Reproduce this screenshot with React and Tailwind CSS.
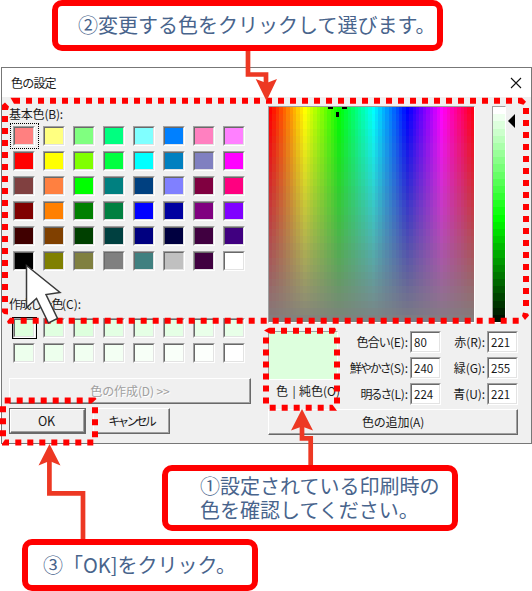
const BASIC_COLORS = [
  ['#ff8080', '#ffff80', '#80ff80', '#00ff80', '#80ffff', '#0080ff', '#ff80c0', '#ff80ff'],
  ['#ff0000', '#ffff00', '#80ff00', '#00ff40', '#00ffff', '#0080c0', '#8080c0', '#ff00ff'],
  ['#804040', '#ff8040', '#00ff00', '#008080', '#004080', '#8080ff', '#800040', '#ff0080'],
  ['#800000', '#ff8000', '#008000', '#008040', '#0000ff', '#0000a0', '#800080', '#8000ff'],
  ['#400000', '#804000', '#004000', '#004040', '#000080', '#000040', '#400040', '#400080'],
  ['#000000', '#808000', '#808040', '#808080', '#408080', '#c0c0c0', '#400040', '#ffffff']
];

const CUSTOM_COLORS = [
  ['#ddffdd', '#e0ffe0', '#ddffdd', '#e3ffe3', '#e5ffe5', '#e5ffe5', '#e9ffe9', '#e8ffe8'],
  ['#edffed', '#edffed', '#f1fff1', '#f3fff3', '#f7fff7', '#f9fff9', '#fcfffc', '#ffffff']
];

const HUE_STEPS = Array.from({ length: 60 }, (_, i) => i);
const LEVEL_STEPS = Array.from({ length: 30 }, (_, i) => i);

const SUNKEN =
  'border border-t-[#a0a0a0] border-l-[#a0a0a0] border-r-white border-b-white';
const SUNKEN_INNER =
  'border border-t-[#696969] border-l-[#696969] border-r-[#e3e3e3] border-b-[#e3e3e3]';
const RAISED =
  'border border-t-white border-l-white border-r-[#696969] border-b-[#696969] shadow-[inset_-1px_-1px_0_#a0a0a0] bg-[#f0f0f0]';

const Swatch = ({ color, focused, selected }) => (
  <div className="relative h-[20px] w-[22px]">
    <div className={`h-full w-full ${SUNKEN}`}>
      <div className={`h-full w-full ${SUNKEN_INNER}`} style={{ backgroundColor: color }} />
    </div>
    {focused && (
      <div className="absolute -top-[3px] -left-[3px] h-[26px] w-[29px] border border-dotted border-black" />
    )}
    {selected && (
      <div className="absolute -top-px -left-px h-[22px] w-[25px] border border-black" />
    )}
  </div>
);

const SwatchGrid = ({ rows, focusFirst, selectFirst }) => (
  <div className="ml-[4px] flex flex-col gap-[5px]">
    {rows.map((row, r) => (
      <div key={r} className="flex gap-2">
        {row.map((color, c) => (
          <Swatch
            key={c}
            color={color}
            focused={focusFirst && r === 0 && c === 0}
            selected={selectFirst && r === 0 && c === 0}
          />
        ))}
      </div>
    ))}
  </div>
);

const Field = ({ label, hotkey, value, tracking = '' }) => (
  <div className="flex h-[22px] items-center justify-end gap-[2px]">
    <span className="whitespace-nowrap">
      <span className={tracking}>{label}</span>
      <span className="tracking-[-0.1px]">{hotkey}</span>
    </span>
    <div className={`h-full w-[31px] ${SUNKEN}`}>
      <div className={`flex h-full w-full items-center bg-white pl-[2px] text-[11.5px] ${SUNKEN_INNER}`}>
        {value}
      </div>
    </div>
  </div>
);

const HueField = () => (
  <svg width="205" height="215" viewBox="0 0 205 215" shapeRendering="crispEdges">
    {HUE_STEPS.map((i) => {
      const x = Math.round(i * 3.42);
      return (
        <rect
          key={i}
          x={x}
          y="0"
          width={Math.round((i + 1) * 3.42) - x}
          height="215"
          fill={`hsl(${i * 6} 100% 50%)`}
        />
      );
    })}
    {LEVEL_STEPS.map((i) => {
      const y = Math.round(i * 7.17);
      return (
        <rect
          key={i}
          x="0"
          y={y}
          width="205"
          height={Math.round((i + 1) * 7.17) - y}
          fill="#808080"
          fillOpacity={i / 30}
        />
      );
    })}
    <path d="M59 0h5v2h-5zM73 0h5v2h-5zM67 5h3v5h-3z" fill="#000" />
  </svg>
);

const LuminanceBar = () => (
  <svg width="12" height="215" viewBox="0 0 12 215" shapeRendering="crispEdges">
    {LEVEL_STEPS.map((i) => {
      const y = Math.round(i * 7.17);
      return (
        <rect
          key={i}
          x="0"
          y={y}
          width="12"
          height={Math.round((i + 1) * 7.17) - y}
          fill={`hsl(120 100% ${100 - (i * 100) / 30}%)`}
        />
      );
    })}
  </svg>
);

const ColorDialog = () => (
  <div className="flex h-[377px] w-[531px] flex-col border border-[#777] bg-[#f0f0f0] text-[12px] leading-4 text-[#1a1a1a]">
    <div className="flex h-[29px] shrink-0 items-center justify-between bg-white pr-[9px] pl-[9px]">
      <span className="tracking-[-0.8px]">色の設定</span>
      <svg width="12" height="12" viewBox="0 0 12 12" fill="none" stroke="#111" strokeWidth="1.1">
        <path d="M1 1l10 10M11 1L1 11" />
      </svg>
    </div>
    <div className="flex pl-[7px]">
      <div className="flex w-[259px] shrink-0 flex-col pt-[9px]">
        <span className="mb-[4px] h-4 tracking-[-0.2px]">基本色(B):</span>
        <SwatchGrid rows={BASIC_COLORS} focusFirst />
        <span className="mt-[25px] mb-[6px] h-4">
          <span className="tracking-[-1.4px]">作成した色</span>
          <span>(C):</span>
        </span>
        <SwatchGrid rows={CUSTOM_COLORS} selectFirst />
        <div
          className={`mt-[15px] flex h-[26px] w-[242px] items-center justify-center tracking-[-0.1px] text-[#a0a0a0] [text-shadow:1px_1px_0_#fff] ${RAISED}`}
        >
          色の作成(D) &gt;&gt;
        </div>
        <div className="mt-[4px] flex gap-[7px]">
          <div className="h-[26px] w-[77px] border border-[#696969]">
            <div className={`flex h-full w-full items-center justify-center pr-[2px] text-[12.5px] tracking-[-0.3px] ${RAISED}`}>
              OK
            </div>
          </div>
          <div className={`flex h-[26px] w-[77px] items-center justify-center pr-[1px] tracking-[-2.9px] ${RAISED}`}>
            キャンセル
          </div>
        </div>
      </div>
      <div className="flex w-[251px] flex-col pt-[9px]">
        <div className="flex">
          <div className={`h-[217px] w-[207px] ${SUNKEN}`}>
            <HueField />
          </div>
          <div className={`ml-[17px] h-[217px] w-[14px] ${SUNKEN}`}>
            <LuminanceBar />
          </div>
          <svg className="mt-[8px] ml-px" width="8" height="14" viewBox="0 0 8 14">
            <path d="M8 0v14L1 7z" fill="#000" />
          </svg>
        </div>
        <div className="mt-[8px] flex h-[74px]">
          <div className="w-[72px] shrink-0">
            <div className={`h-[49px] w-[70px] bg-[#ddffdd] ${SUNKEN}`} />
            <div className="mt-[3px] flex h-4 overflow-hidden pl-[8px] whitespace-nowrap">
              <span className="w-[18px]">色</span>
              <span className="w-[7px]">|</span>
              <span>純色(O)</span>
            </div>
          </div>
          <div className="flex w-[101px] flex-col gap-[4px]">
            <Field label="色合い" hotkey="(E):" value="80" tracking="tracking-[-0.9px]" />
            <Field label="鮮やかさ" hotkey="(S):" value="240" tracking="tracking-[-2px]" />
            <Field label="明るさ" hotkey="(L):" value="224" tracking="tracking-[-2px]" />
          </div>
          <div className="flex w-[77px] flex-col gap-[4px]">
            <Field label="赤" hotkey="(R):" value="221" />
            <Field label="緑" hotkey="(G):" value="255" />
            <Field label="青" hotkey="(U):" value="221" />
          </div>
        </div>
        <div className={`mt-[4px] flex h-[26px] w-[250px] items-center justify-center tracking-[-0.2px] ${RAISED}`}>
          色の追加(A)
        </div>
      </div>
    </div>
  </div>
);

// Dotted frames, pointer and arrows drawn over the dialog
const Annotations = () => (
  <svg className="pointer-events-none absolute inset-0" width="532" height="591" viewBox="0 0 532 591">
    <g fill="none" stroke="#ff0000" strokeWidth="6" strokeDasharray="6 6">
      <path d="M26 100.7H513" />
      <path d="M5 116V306" />
      <path d="M20.7 320.7H519" />
      <path d="M526 108V307" />
      <path d="M281 330.7H326" />
      <path d="M266 337.5V404" />
      <path d="M337 337.5V404" />
      <path d="M269.7 407.8H324" />
      <path d="M4.7 400.5H84" />
      <path d="M3 406.3V437" />
      <path d="M95 407.3V438" />
      <path d="M15.3 442.6H94" />
    </g>
    <g fill="#ff0000">
      <path d="M10.5 97.7h9.5v6h-6z" />
      <path d="M2 105l3-2.5 4 4-1 3.5H2z" />
      <path d="M518 97.7h4l4 4-2.5 3-5.5-1.5z" />
      <path d="M2 308.5h6v6l-4-.5-2-2z" />
      <path d="M7 321.5l3-3.8h4v6H8z" />
      <path d="M523 312.5l5 1 1 2-4 4.5-3-4z" />
      <path d="M264 330.5l5-2.8h6v6h-5z" />
      <path d="M329 327.7h6l1 2-2 4h-5z" />
      <path d="M329.5 404.8h3l4.5 6h-7.5z" />
      <path d="M88.5 397.5h7l1 1.5-5 4.5h-3z" />
      <path d="M2 444l3-4.4h4v6H2z" />
    </g>
    <path
      d="M26.5 265.5V307.5L36.5 298.5L48.5 323L57.5 318.5L46 294.5L60 292.5Z"
      fill="#fff"
      stroke="#3a3a3a"
      strokeWidth="1.5"
    />
    <g fill="none" stroke="#ed3823" strokeWidth="4.7">
      <path d="M248 50V74.5H266V84" />
      <path d="M310.7 466V438.3H302V426" />
      <path d="M83 540V493.3H49.4V460" />
    </g>
    <g fill="#ed3823">
      <path d="M266.5 101l-10.8-22 10.8 4 10.5-4z" />
      <path d="M302 409l-11 21.5 11-4 11 4z" />
      <path d="M49.5 444l-11 21.5 11-4.5 11 4.5z" />
    </g>
  </svg>
);

const Callout = ({ className, children }) => (
  <div
    className={`absolute rounded-[10px] border-[6px] border-[#ff0000] bg-white text-[20px] leading-6 whitespace-nowrap text-[#48648c] ${className}`}
  >
    {children}
  </div>
);

export default function App() {
  return (
    <div className="relative h-[591px] w-[532px] overflow-hidden bg-white pt-[67px] pl-px font-['Noto_Sans_CJK_JP',sans-serif]">
      <ColorDialog />
      <Annotations />
      <Callout className="top-0 left-[52px] h-[51px] w-[391px] pt-[7px] pl-[20px]">
        ②変更する色をクリックして選びます。
      </Callout>
      <Callout className="top-[465px] left-[162px] h-[66px] w-[296px] pt-[3px] pl-[32px]">
        <div>①設定されている印刷時の</div>
        <div>色を確認してください。</div>
      </Callout>
      <Callout className="top-[539px] left-[22px] h-[52px] w-[236px] pt-[8px] pl-[15px]">
        ③「OK]をクリック。
      </Callout>
    </div>
  );
}
